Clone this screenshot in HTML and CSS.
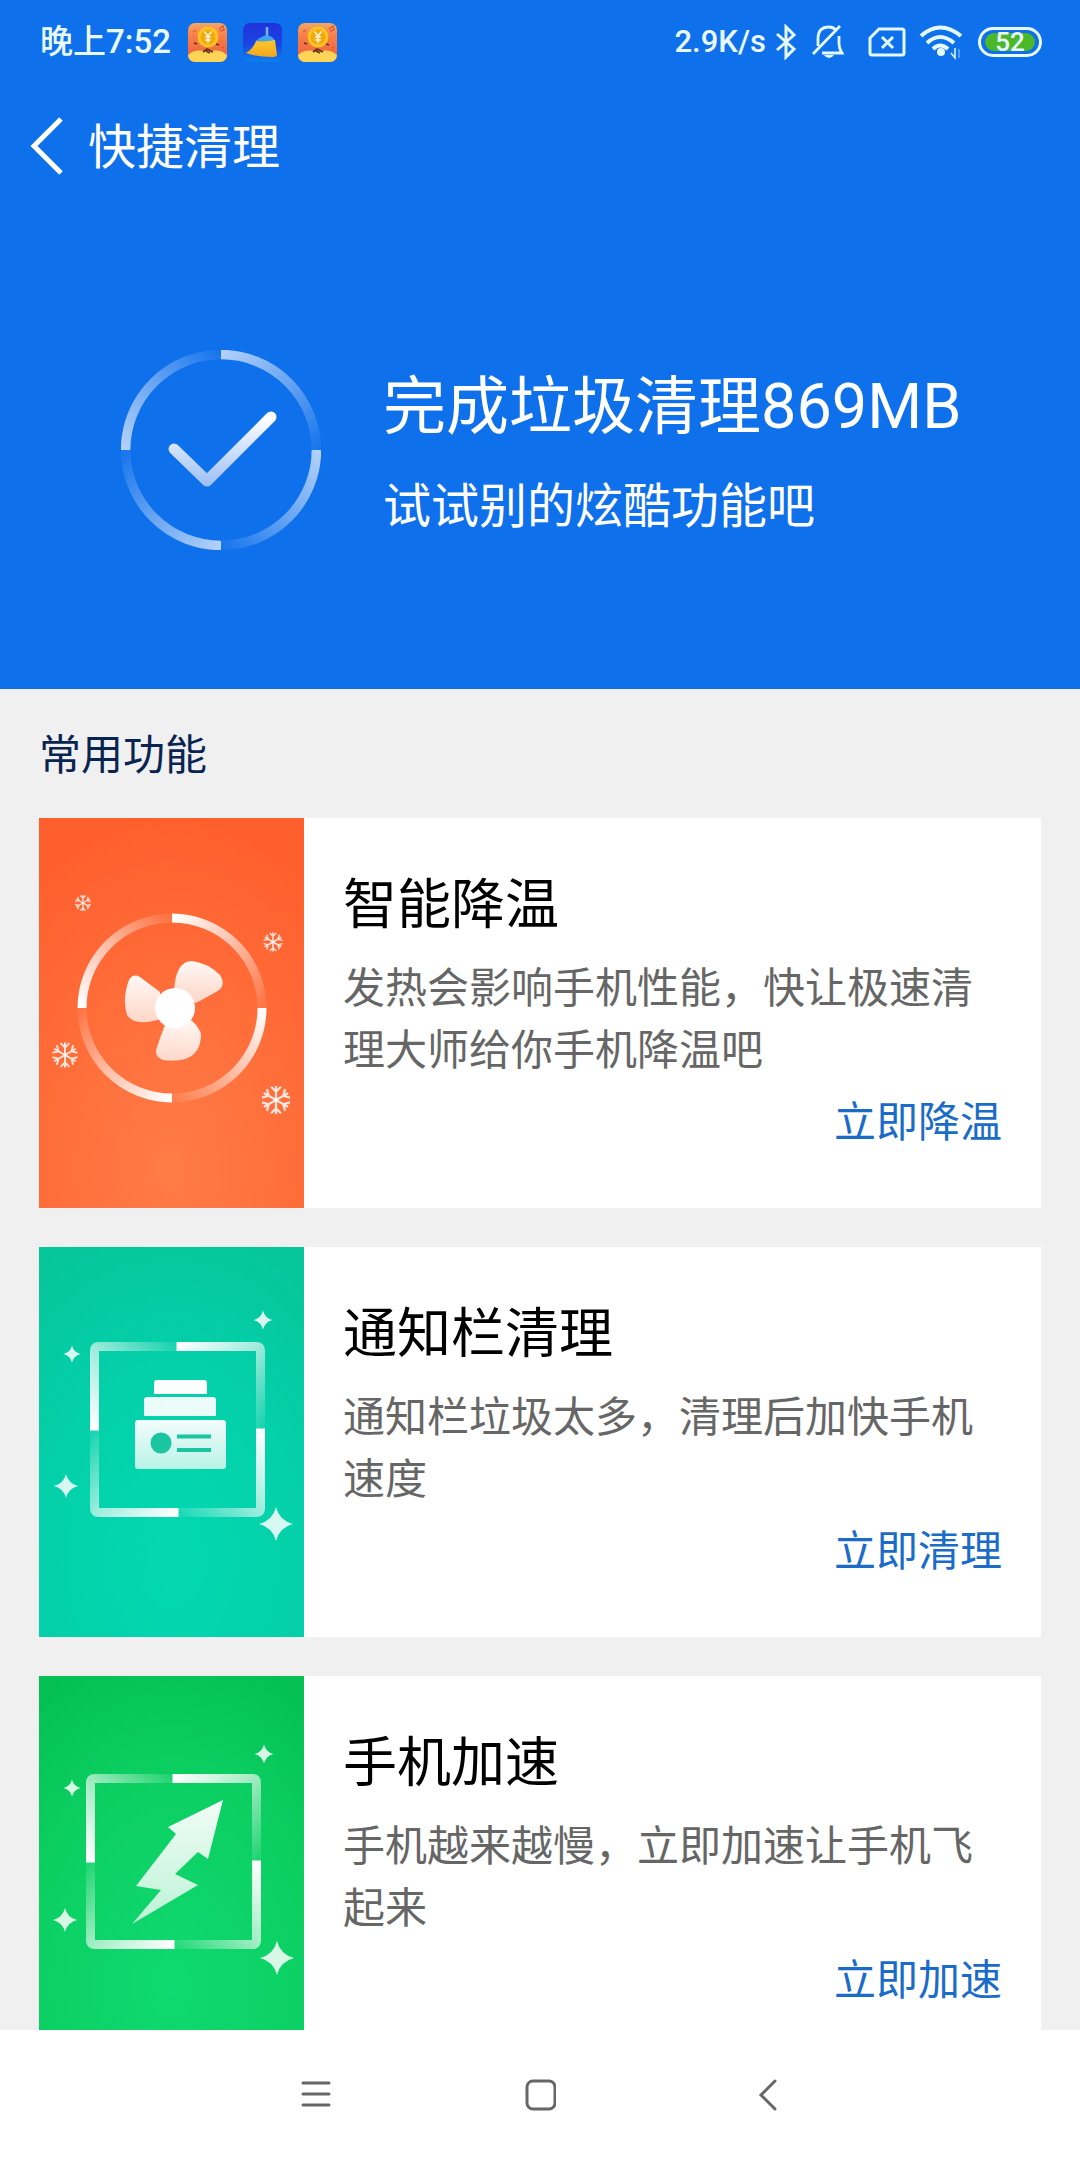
FILE: index.html
```html
<!DOCTYPE html>
<html lang="zh-CN">
<head>
<meta charset="utf-8">
<meta name="viewport" content="width=device-width, initial-scale=1">
<title>快捷清理</title>
<link rel="stylesheet" href="styles.css">
</head>
<body>
<svg class="defs" width="0" height="0" aria-hidden="true">
  <defs>
    <linearGradient id="arc-fade" gradientUnits="userSpaceOnUse" x1="0" y1="-90" x2="90" y2="0">
      <stop offset="0" stop-color="#fff"/><stop offset=".5" stop-color="#fff" stop-opacity=".55"/><stop offset="1" stop-color="#fff" stop-opacity=".06"/>
    </linearGradient>
    <linearGradient id="frame-fade" gradientUnits="userSpaceOnUse" x1="0" y1="-83" x2="83" y2="0">
      <stop offset="0" stop-color="#fff"/><stop offset=".5" stop-color="#fff" stop-opacity=".6"/><stop offset="1" stop-color="#fff" stop-opacity=".08"/>
    </linearGradient>
    <linearGradient id="shade" x1="0" y1="0" x2="0" y2="1">
      <stop offset="0" stop-color="#fff" stop-opacity=".95"/><stop offset="1" stop-color="#fff" stop-opacity=".72"/>
    </linearGradient>
    <g id="ring" fill="none" stroke="url(#arc-fade)" stroke-width="9">
      <path d="M0-90A90 90 0 0 1 90 0"/>
      <path d="M0-90A90 90 0 0 1 90 0" transform="rotate(90)"/>
      <path d="M0-90A90 90 0 0 1 90 0" transform="rotate(180)"/>
      <path d="M0-90A90 90 0 0 1 90 0" transform="rotate(270)"/>
    </g>
    <g id="frame" fill="none" stroke="url(#frame-fade)" stroke-width="9">
      <path d="M-1-83H79Q83-83 83-79V0"/>
      <path d="M-1-83H79Q83-83 83-79V0" transform="rotate(90)"/>
      <path d="M-1-83H79Q83-83 83-79V0" transform="rotate(180)"/>
      <path d="M-1-83H79Q83-83 83-79V0" transform="rotate(270)"/>
    </g>
    <path id="spark" d="M0-10Q2-2 10 0Q2 2 0 10Q-2 2-10 0Q-2-2 0-10Z" fill="#fff" fill-opacity=".84"/>
    <g id="flake" fill="none" stroke="#fff" stroke-opacity=".82" stroke-width="1.6">
      <path id="limb" d="M0 0V-10M-3.5-9.5L0-6L3.5-9.5"/>
      <use href="#limb" transform="rotate(60)"/><use href="#limb" transform="rotate(120)"/>
      <use href="#limb" transform="rotate(180)"/><use href="#limb" transform="rotate(240)"/><use href="#limb" transform="rotate(300)"/>
    </g>
    <linearGradient id="coin-bg" x1="0" y1="0" x2="0" y2="1">
      <stop offset="0" stop-color="#f3a765"/><stop offset=".35" stop-color="#f77d48"/><stop offset="1" stop-color="#ee5c3c"/>
    </linearGradient>
    <clipPath id="app-clip"><rect width="39" height="39" rx="7"/></clipPath>
    <g id="coin-app" clip-path="url(#app-clip)">
      <rect width="39" height="39" fill="url(#coin-bg)"/>
      <path d="M0 32Q8 25 19 29Q31 25 39 32V39H0Z" fill="#fcd557"/>
      <circle cx="20" cy="14" r="10.5" fill="#fdc61f"/><circle cx="20" cy="14" r="7.500" fill="#f3a80f"/>
      <path d="M16.500 8.500L20 13L23.500 8.500M20 13V20M17 14H23M17 17H23" fill="none" stroke="#fff3cf" stroke-width="1.700"/>
      <path d="M15 29L19 26L25 29M18 28L22 30M28 21L31 22M6 20L9 21" fill="none" stroke="#65311c" stroke-width="1.800"/>
      <path d="M5 9L8 7M31 6L35 3L36 7L32 8M34 24L36 25" fill="none" stroke="#d95b31" stroke-width="1.400"/>
    </g>
    <linearGradient id="broom-bg" x1="0" y1="0" x2="0" y2="1">
      <stop offset="0" stop-color="#1f32dc"/><stop offset=".55" stop-color="#1b45e2"/><stop offset="1" stop-color="#0b80ee"/>
    </linearGradient>
    <linearGradient id="broom" x1="0" y1="0" x2="0" y2="1">
      <stop offset="0" stop-color="#fbc92c"/><stop offset="1" stop-color="#f2a51d"/>
    </linearGradient>
  </defs>
</svg>

<div class="app">
  <header class="hero">
    <div class="status">
      <span class="clock">晚上7:52</span>
      <span class="notices">
        <svg width="39" height="39" viewBox="0 0 39 39" role="img" aria-label="红包"><use href="#coin-app"/></svg>
        <svg width="39" height="39" viewBox="0 0 39 39" role="img" aria-label="清理大师">
          <rect width="39" height="39" rx="7" fill="url(#broom-bg)"/>
          <path d="M24 4V13" stroke="#70b9f7" stroke-width="2.500"/>
          <path d="M13 18Q17 14 23 12Q30 13 32 18Z" fill="#3aa5f5"/>
          <path d="M13 18Q24 19 32 17L34 32Q33 34 29 34Q14 34 3 30Q10 26 13 18Z" fill="url(#broom)"/>
        </svg>
        <svg width="39" height="39" viewBox="0 0 39 39" role="img" aria-label="红包"><use href="#coin-app"/></svg>
      </span>
      <span class="speed">2.9K/s</span>
      <svg class="i-bt" width="22" height="36" viewBox="0 0 22 36" fill="none" stroke="#e4f8ff" stroke-width="3" aria-label="蓝牙" role="img"><path d="M2 10L19 25L11 33V3L19 11L2 26"/></svg>
      <svg class="i-bell" width="34" height="36" viewBox="0 0 34 36" fill="none" stroke="#e4f8ff" stroke-width="2.800" aria-label="静音" role="img"><path d="M7 22V15Q7 3 18 3Q22 3 25 6M28 12V20Q28 24 31 29H11M2 30L29 2"/><path d="M13 31H23Q21 34 18 34T13 31Z" fill="#e4f8ff" stroke="none"/></svg>
      <svg class="i-sim" width="38" height="32" viewBox="0 0 38 32" fill="none" stroke="#e4f8ff" stroke-width="3" aria-label="无 SIM 卡" role="img"><path d="M11 3H34Q36 3 36 5V27Q36 29 34 29H4Q2 29 2 27V12Z"/><path d="M14 11L25 22M25 11L14 22"/></svg>
      <svg class="i-wifi" width="44" height="36" viewBox="0 0 44 36" fill="none" stroke="#e4f8ff" stroke-width="4" aria-label="无线网络" role="img"><path d="M2 12Q21-5 42 12M8 19Q21 7 35 19M14 25Q21 18 29 25"/><circle cx="22" cy="28" r="4" fill="#e4f8ff" stroke="none"/><path d="M36 24V34L32 29" stroke-width="1.500"/><path d="M40 34V25" stroke="#68aef5" stroke-width="1.500"/></svg>
      <span class="battery"><span>52</span></span>
    </div>

    <div class="titlebar">
      <button class="back" type="button" aria-label="返回">
        <svg width="34" height="60" viewBox="0 0 34 60" fill="none" stroke="#fff" stroke-width="5"><path d="M31 3L4 30L31 57"/></svg>
      </button>
      <h1>快捷清理</h1>
    </div>

    <div class="result">
      <svg class="done" width="200" height="200" viewBox="-100 -100 200 200" aria-hidden="true">
        <defs><linearGradient id="tick" gradientUnits="userSpaceOnUse" x1="0" y1="-34" x2="0" y2="36"><stop offset="0" stop-color="#fff"/><stop offset="1" stop-color="#9dbff5"/></linearGradient></defs>
        <g opacity=".68"><use href="#ring" transform="scale(1.06)"/></g>
        <path d="M-47-1L-14 31L50-33" fill="none" stroke="url(#tick)" stroke-width="11" stroke-linecap="round" stroke-linejoin="round"/>
      </svg>
      <div class="summary">
        <p class="headline">完成垃圾清理869MB</p>
        <p class="hint">试试别的炫酷功能吧</p>
      </div>
    </div>
  </header>

  <main class="features">
    <h2>常用功能</h2>

    <article class="card">
      <div class="art cool">
        <svg width="265" height="390" viewBox="0 0 265 390" aria-hidden="true">
          <use href="#ring" transform="translate(133 190)"/>
          <path d="M135 175Q136 143 153 143Q169 145 181 157Q188 168 177 174L157 185Z" fill="url(#shade)"/>
          <path d="M121 174L101 159Q94 155 90 162Q83 180 88 197Q96 209 121 201Z" fill="url(#shade)"/>
          <path d="M126 207Q122 217 117 232Q116 239 124 242Q162 247 162 216Q160 209 152 202Z" fill="url(#shade)"/>
          <circle cx="136" cy="190" r="20" fill="#fff"/>
          <use href="#flake" transform="translate(44 85) scale(.8)"/>
          <use href="#flake" transform="translate(234 124) scale(.95)"/>
          <use href="#flake" transform="translate(26 237) scale(1.250)"/>
          <use href="#flake" transform="translate(237 282) scale(1.400)"/>
        </svg>
      </div>
      <div class="body">
        <h3>智能降温</h3>
        <p>发热会影响手机性能，快让极速清理大师给你手机降温吧</p>
        <a href="#cool">立即降温</a>
      </div>
    </article>

    <article class="card">
      <div class="art notify">
        <svg width="265" height="390" viewBox="0 0 265 390" aria-hidden="true">
          <use href="#frame" transform="translate(138.500 182.500)"/>
          <path d="M118 133H165Q168 133 168 136V147H115V136Q115 133 118 133Z" fill="#fff" fill-opacity=".98"/>
          <path d="M108 150H174Q177 150 177 153V169H105V153Q105 150 108 150Z" fill="#fff" fill-opacity=".92"/>
          <rect x="96" y="173" width="91" height="49" rx="3" fill="url(#shade)"/>
          <circle cx="122" cy="196" r="10.500" fill="#1ac5a0"/>
          <path d="M138 189.500H172M138 203H172" stroke="#1ac5a0" stroke-width="4"/>
          <use href="#spark" transform="translate(33 107) scale(.85)"/>
          <use href="#spark" transform="translate(224 73) scale(.95)"/>
          <use href="#spark" transform="translate(27 239) scale(1.200)"/>
          <use href="#spark" transform="translate(237 277) scale(1.700)"/>
        </svg>
      </div>
      <div class="body">
        <h3>通知栏清理</h3>
        <p>通知栏垃圾太多，清理后加快手机速度</p>
        <a href="#notify">立即清理</a>
      </div>
    </article>

    <article class="card">
      <div class="art boost">
        <svg width="265" height="390" viewBox="0 0 265 390" aria-hidden="true">
          <use href="#frame" transform="translate(134.500 185.500)"/>
          <path d="M184 124L169 183L159 176L136 198L159 209L93 248L122 214L97 210L137 158L129 151Z" fill="url(#shade)"/>
          <use href="#spark" transform="translate(33 112) scale(.85)"/>
          <use href="#spark" transform="translate(225 78) scale(.95)"/>
          <use href="#spark" transform="translate(26 244) scale(1.200)"/>
          <use href="#spark" transform="translate(238 282) scale(1.700)"/>
        </svg>
      </div>
      <div class="body">
        <h3>手机加速</h3>
        <p>手机越来越慢，立即加速让手机飞起来</p>
        <a href="#boost">立即加速</a>
      </div>
    </article>
  </main>

  <nav class="sysnav" aria-label="系统导航">
    <button type="button" aria-label="最近任务"><svg width="32" height="32" viewBox="0 0 32 32"><path d="M4 4H30M4 15H30M4 26H30" stroke-linecap="round"/></svg></button>
    <button type="button" aria-label="主屏幕"><svg width="32" height="32" viewBox="0 0 32 32"><rect x="3" y="2" width="28" height="28" rx="6"/></svg></button>
    <button type="button" aria-label="返回上一页"><svg width="32" height="32" viewBox="0 0 32 32"><path d="M26 2L12 16L26 30" stroke-linecap="round"/></svg></button>
  </nav>
</div>
</body>
</html>
```
FILE: styles.css
```css
* { box-sizing: border-box; }

body, h1, h2, h3, p { margin: 0; font-weight: 400; }

body {
  font-family: Roboto, "Noto Sans CJK SC", sans-serif;
  background: #f0f0f0;
}

button {
  padding: 0;
  border: 0;
  background: none;
}

svg { display: block; flex: none; }

.defs { position: absolute; }

.app {
  display: flex;
  flex-direction: column;
  height: 100vh;
}

/* Blue area */
.hero {
  flex: none;
  padding-bottom: 132px;
  background: #0f70ec;
  color: #fff;
}

.status {
  display: flex;
  align-items: center;
  height: 84px;
  padding: 0 38px 0 40px;
  color: #e8faff;
}

.clock { font-size: 33px; font-weight: 500; line-height: 40px; }

.notices { display: flex; gap: 16px; margin: 0 auto 0 17px; }

.speed { font-size: 31px; font-weight: 500; line-height: 40px; }

.i-bt { margin-left: 9px; }
.i-bell { margin-left: 14px; }
.i-sim { margin-left: 23px; }
.i-wifi { margin-left: 13px; }

.battery {
  display: flex;
  width: 64px;
  height: 30px;
  margin-left: 15px;
  padding: 3px 4px;
  border: 3px solid #e8faff;
  border-radius: 15px;
}

.battery span {
  flex: 1;
  border-radius: 9px;
  background: #4bb82c;
  font-size: 26px;
  font-weight: 500;
  line-height: 18px;
  text-align: center;
}

.titlebar {
  display: flex;
  align-items: center;
  gap: 24px;
  height: 124px;
  padding-left: 30px;
}

.titlebar h1 { padding-top: 4px; font-size: 48px; line-height: 64px; }

.result {
  display: flex;
  align-items: center;
  gap: 62px;
  padding: 134px 40px 0 121px;
}

.summary { padding-top: 15px; }

.headline { font-size: 63px; line-height: 100px; }

.hint { font-size: 48px; line-height: 100px; }

/* Feature list */
.features {
  flex: 1;
  min-height: 0;
  overflow-y: auto;
  padding: 0 39px 39px;
  scrollbar-width: none;
}

.features h2 {
  padding: 35px 0 30px;
  color: #0a2452;
  font-size: 42px;
  line-height: 64px;
}

.card {
  display: flex;
  min-height: 390px;
  background: #fff;
}

.card + .card { margin-top: 39px; }

.art { flex: none; }

.cool { background: radial-gradient(ellipse 90% 90% at 50% 90%, #ff7c48 0, #ff6e3a 50%, #ff5f2d 100%); }
.notify { background: radial-gradient(ellipse 90% 90% at 50% 80%, #03d9b1 0, #04cfa8 60%, #06c59a 100%); }
.boost { background: radial-gradient(ellipse 90% 90% at 50% 80%, #0fd970 0, #0ccf62 60%, #04c054 100%); }

.body {
  display: flex;
  flex: 1;
  flex-direction: column;
  padding: 46px 39px 20px;
}

.body h3 { color: #000; font-size: 54px; line-height: 84px; }

.body p {
  margin-top: 10px;
  color: #666;
  font-size: 42px;
  line-height: 62px;
}

.body a {
  align-self: flex-end;
  margin-top: 10px;
  color: #1a6cc8;
  font-size: 42px;
  line-height: 62px;
  text-decoration: none;
}

/* System navigation */
.sysnav {
  display: flex;
  flex: none;
  justify-content: center;
  height: 130px;
  background: #fff;
}

.sysnav button {
  display: flex;
  flex: 0 1 225px;
  align-items: center;
  justify-content: center;
}

.sysnav svg { fill: none; stroke: #666; stroke-width: 3; }
```
